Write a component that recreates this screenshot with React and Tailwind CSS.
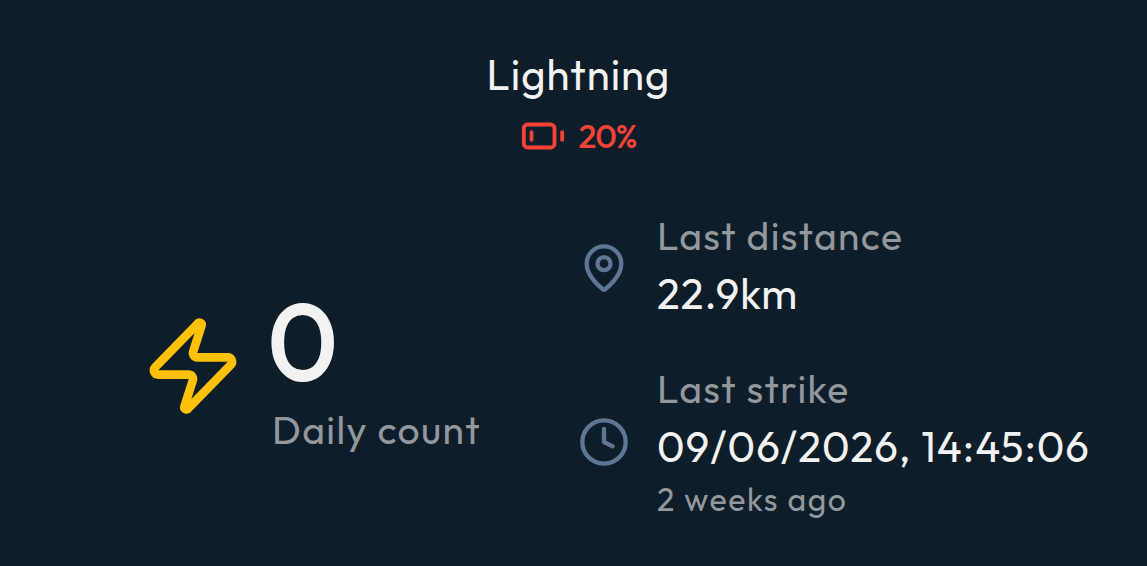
import { Zap, MapPin, Clock, BatteryLow } from 'lucide-react';

const strike = {
    count: '0',
    battery: '20%',
    distance: '22.9km',
    time: '09/06/2026, 14:45:06',
    ago: '2 weeks ago'
};

export default function App() {
    return (
        <main className="flex h-[566px] w-[1147px] flex-col overflow-hidden bg-[#0d1e2a] font-['Outfit','Lato',sans-serif] font-[370] text-[#f2f2f2]">
            <header className="flex flex-col items-center pl-[10px] pt-[44px]">
                <h1 className="h-[60px] text-[42px] leading-[61px] tracking-[1px]">Lightning</h1>
                <div className="mt-[7px] flex h-[50px] items-center gap-[12px] text-[#f44336]">
                    <BatteryLow size={46} strokeWidth={2} />
                    <span className="pt-[2px] text-[33px] font-medium tracking-[-1px]">{strike.battery}</span>
                </div>
            </header>
            <section className="flex pl-[141px] pt-[49px]">
                <div className="flex w-[437px] items-start pt-[72px]">
                    <Zap size={104} strokeWidth={2} className="mt-[32px] shrink-0 text-[#ffc107]" />
                    <div className="ml-[22px]">
                        <div className="h-[119px] text-[109px] font-medium leading-[118px]">{strike.count}</div>
                        <div className="pl-[5px] text-[39px] leading-[58px] tracking-[1.4px] text-[#93989d]">Daily count</div>
                    </div>
                </div>
                <div className="flex flex-col gap-[37px]">
                    <div className="flex items-center gap-[27px]">
                        <MapPin size={52} className="shrink-0 text-[#5f7695]" />
                        <div>
                            <div className="text-[39px] leading-[52px] tracking-[1.4px] text-[#93989d]">Last distance</div>
                            <div className="text-[42px] leading-[64px] tracking-[1px]">{strike.distance}</div>
                        </div>
                    </div>
                    <div className="flex items-center gap-[27px]">
                        <Clock size={52} className="mt-[2px] shrink-0 text-[#5f7695]" />
                        <div>
                            <div className="text-[39px] leading-[52px] tracking-[1.4px] text-[#93989d]">Last strike</div>
                            <div className="whitespace-nowrap text-[42px] leading-[64px] tracking-[1px]">{strike.time}</div>
                            <div className="text-[32px] leading-[40px] tracking-[1.65px] text-[#93989d]">{strike.ago}</div>
                        </div>
                    </div>
                </div>
            </section>
        </main>
    );
}
